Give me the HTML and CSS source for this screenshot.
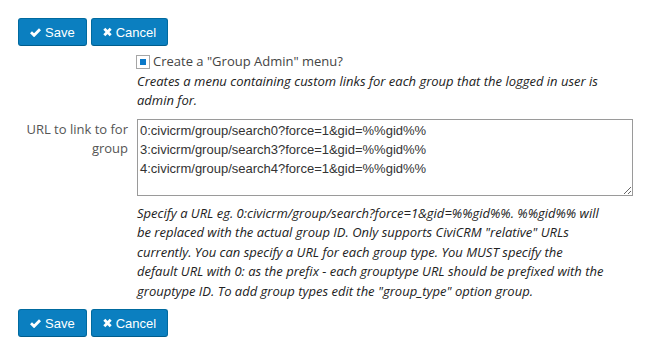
FILE: index.html
```html
<!DOCTYPE html>
<html lang="en">
<head>
    <meta charset="UTF-8">
    <title>Group Admin settings</title>
    <link rel="stylesheet" href="styles.css">
</head>
<body>

<div class="page">
    <div class="buttons buttons-top">
        <button type="button" class="btn">
            <svg class="icon" width="11" height="10" viewBox="0 0 11 10"><path d="M1 5.2 L4.1 8.3 L10 2.2" fill="none" stroke="#fff" stroke-width="2.8"/></svg>
            Save
        </button>
        <button type="button" class="btn">
            <svg class="icon" width="9" height="10" viewBox="0 0 9 10"><path d="M1.3 1.8 L7.7 8.2 M7.7 1.8 L1.3 8.2" fill="none" stroke="#fff" stroke-width="2.8"/></svg>
            Cancel
        </button>
    </div>

    <div class="form-layout">
        <div class="label"></div>
        <div class="field">
            <label class="check-line">
                <span class="checkbox"><span class="checkbox-mark"></span></span>
                Create a "Group Admin" menu?
            </label>
            <div class="help">Creates a menu containing custom links for each group that the logged in user is admin for.</div>
        </div>

        <label class="label label-url" for="url">URL to link to for group</label>
        <div class="field field-url">
            <textarea id="url" rows="4">0:civicrm/group/search0?force=1&amp;gid=%%gid%%
3:civicrm/group/search3?force=1&amp;gid=%%gid%%
4:civicrm/group/search4?force=1&amp;gid=%%gid%%</textarea>
            <div class="help help-url">Specify a URL eg. 0:civicrm/group/search?force=1&amp;gid=%%gid%%. %%gid%% will<br>
                be replaced with the actual group ID. Only supports CiviCRM "relative" URLs<br>
                currently. You can specify a URL for each group type. You MUST specify the<br>
                default URL with 0: as the prefix - each grouptype URL should be prefixed with the<br>
                grouptype ID. To add group types edit the "group_type" option group.</div>
        </div>
    </div>

    <div class="buttons buttons-bottom">
        <button type="button" class="btn">
            <svg class="icon" width="11" height="10" viewBox="0 0 11 10"><path d="M1 5.2 L4.1 8.3 L10 2.2" fill="none" stroke="#fff" stroke-width="2.8"/></svg>
            Save
        </button>
        <button type="button" class="btn">
            <svg class="icon" width="9" height="10" viewBox="0 0 9 10"><path d="M1.3 1.8 L7.7 8.2 M7.7 1.8 L1.3 8.2" fill="none" stroke="#fff" stroke-width="2.8"/></svg>
            Cancel
        </button>
    </div>
</div>

</body>
</html>
```

FILE: styles.css
```css
body {
    margin: 0;
    background: #fff;
    font-family: 'Open Sans', 'Noto Sans', sans-serif;
    font-size: 13px;
    line-height: 1.5;
    color: #3e3e3e;
}
.page {
    padding: 18px 0 0 18px;
}
.buttons {
    display: flex;
    gap: 4px;
}
.btn {
    display: flex;
    align-items: center;
    gap: 4px;
    height: 28px;
    padding: 0 11px 0 11px;
    background-color: #0b7fc0;
    border: 1px solid #006a9f;
    border-bottom-color: #005d8c;
    border-radius: 3px;
    color: #fff;
    font-family: 'Liberation Sans', Arial, sans-serif;
    font-size: 13px;
    cursor: pointer;
}
.icon {
    display: block;
}
.form-layout {
    display: grid;
    grid-template-columns: 110px 1fr;
    column-gap: 9px;
    margin-top: 6px;
}
.check-line {
    display: flex;
    align-items: center;
    gap: 3px;
    color: #444;
}
.checkbox {
    display: flex;
    align-items: center;
    justify-content: center;
    width: 12px;
    height: 12px;
    margin-left: -1px;
    border: 1px solid #a6a6a6;
    background: #fff;
}
.checkbox-mark {
    width: 6px;
    height: 6px;
    background: #0a78c8;
}
.help {
    font-style: italic;
    color: #222;
    max-width: 488px;
}
.label-url {
    text-align: right;
    color: #555;
    margin-top: 9px;
}
.field-url {
    margin-top: 8px;
}
textarea {
    display: block;
    box-sizing: border-box;
    width: 496px;
    height: 77px;
    margin: 0;
    padding: 1px 2px;
    border: 1px solid #9a9a9a;
    font-family: 'Liberation Sans', Arial, sans-serif;
    font-size: 13px;
    line-height: 19.3px;
    color: #333;
    resize: vertical;
}
.help-url {
    margin-top: 8px;
    max-width: 500px;
    white-space: nowrap;
}
.buttons-bottom {
    margin-top: 8px;
}
```
